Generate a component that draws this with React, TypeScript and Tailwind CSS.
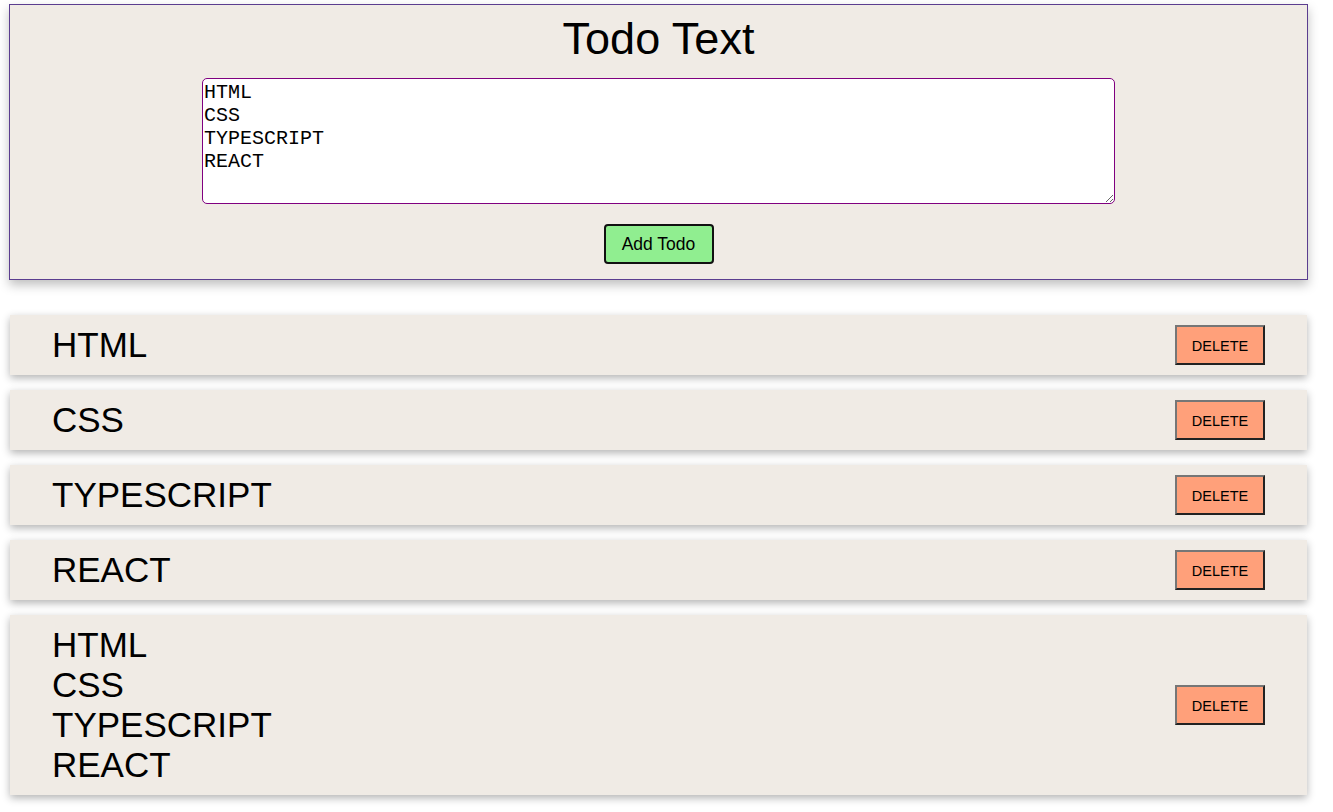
import React, { useState } from 'react';

interface Todo {
  id: number;
  text: string;
}

const initialTodos: Todo[] = [
  { id: 1, text: 'HTML' },
  { id: 2, text: 'CSS' },
  { id: 3, text: 'TYPESCRIPT' },
  { id: 4, text: 'REACT' },
  { id: 5, text: 'HTML\nCSS\nTYPESCRIPT\nREACT' }
];

const App: React.FC = () => {
  const [text, setText] = useState<string>('HTML\nCSS\nTYPESCRIPT\nREACT');
  const [todos, setTodos] = useState<Todo[]>(initialTodos);

  const handleSubmit = (e: React.FormEvent) => {
    e.preventDefault();
    if (!text.trim()) return;
    setTodos([...todos, { id: Date.now(), text }]);
  };

  const removeTodo = (id: number) => {
    setTodos(todos.filter((t) => t.id !== id));
  };

  return (
    <div className="h-screen overflow-hidden bg-white pt-[4px] font-['Liberation_Sans',Arial,sans-serif] text-black">
      <form
        onSubmit={handleSubmit}
        className="ml-[9px] w-[1299px] h-[276px] border border-[#5b3d8f] bg-[#f0ebe5] shadow-[0_5px_10px_rgba(0,0,0,0.25)] flex flex-col items-center pt-[8px]"
      >
        <label htmlFor="todo-text" className="text-[45px] leading-[52px]">
          Todo Text
        </label>
        <textarea
          id="todo-text"
          value={text}
          onChange={(e) => setText(e.target.value)}
          className="mt-[13px] w-[913px] h-[126px] bg-white border border-[#800080] rounded-[5px] pl-[1px] pr-[2px] pt-[2px] font-['Liberation_Mono',monospace] text-[20px] leading-[23px] outline-none"
        />
        <button
          type="submit"
          className="mt-[20px] w-[110px] h-[40px] bg-[#90ee90] border-2 border-[#111] rounded-[4px] text-[17.5px] cursor-pointer"
        >
          Add Todo
        </button>
      </form>

      <ul className="mt-[35px] ml-[10px] w-[1297px] flex flex-col gap-[15px]">
        {todos.map((todo) => (
          <li
            key={todo.id}
            className="bg-[#f0ebe5] shadow-[0_3px_8px_rgba(0,0,0,0.3)] flex items-center justify-between pl-[42px] pr-[42px] py-[10px]"
          >
            <span className="text-[35px] leading-[40px] whitespace-pre-line">{todo.text}</span>
            <button
              onClick={() => removeTodo(todo.id)}
              className="w-[90px] h-[40px] pt-[3px] bg-[#ffa07a] border-2 border-t-[#767676] border-l-[#767676] border-r-[#222] border-b-[#222] text-[14.5px] cursor-pointer"
            >
              DELETE
            </button>
          </li>
        ))}
      </ul>
    </div>
  );
};

export default App;
